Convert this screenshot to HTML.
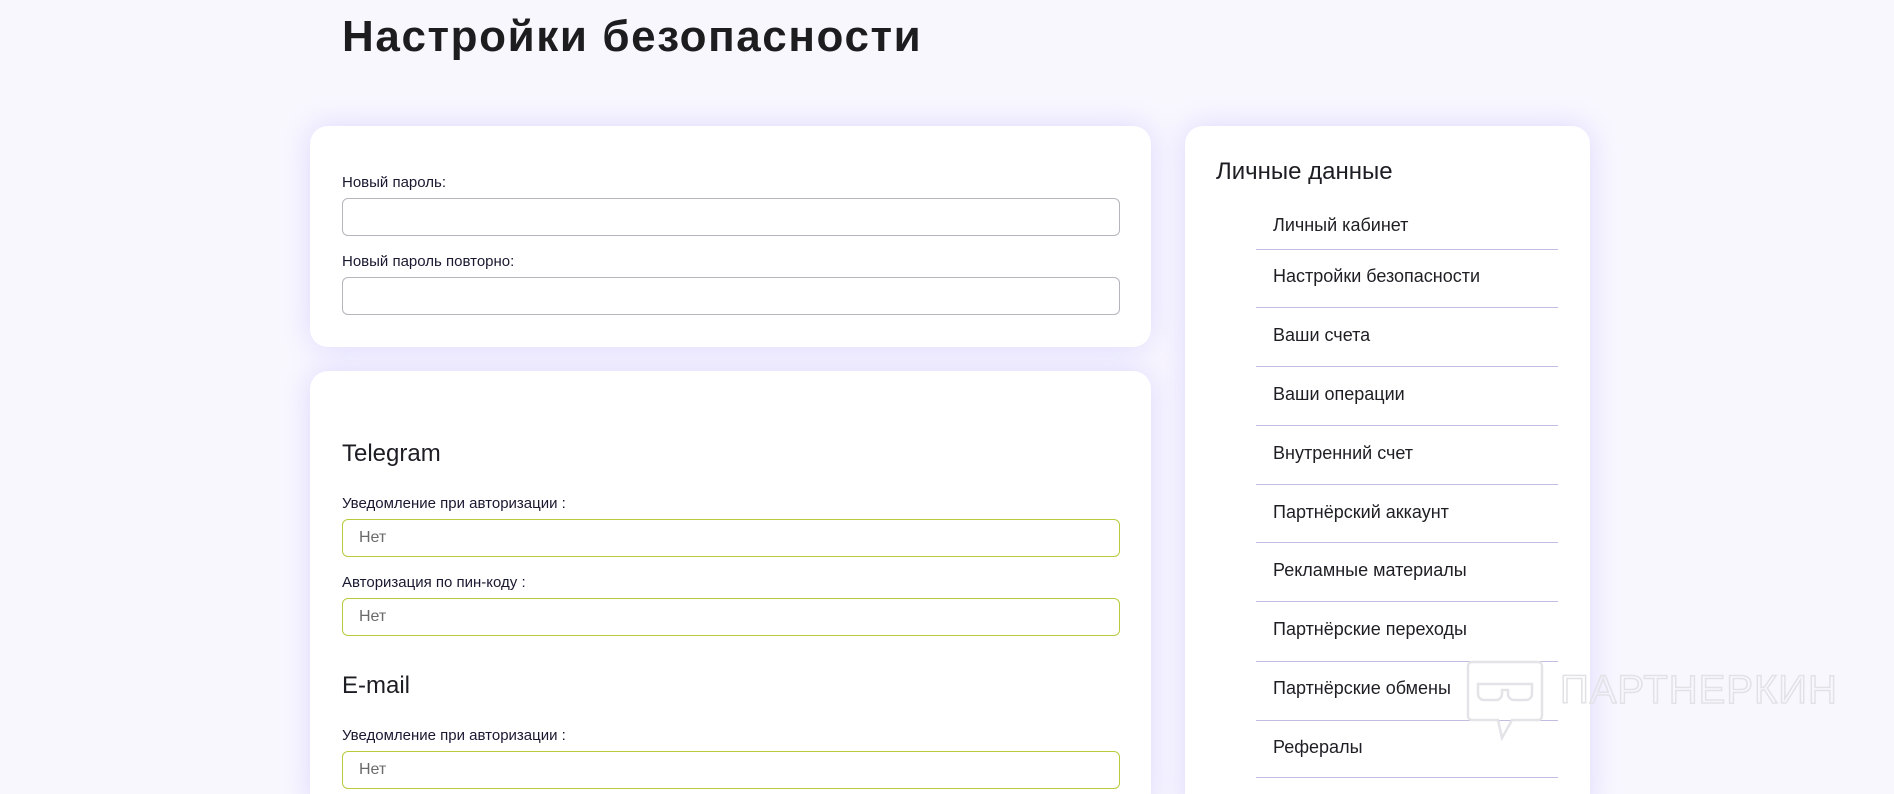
<!DOCTYPE html>
<html><head><meta charset="utf-8"><style>
*{box-sizing:border-box;margin:0;padding:0}
html{width:1894px;height:794px;overflow:hidden}
body{width:1894px;height:794px;overflow:hidden;background:#f8f7fe;font-family:"Liberation Sans",sans-serif;position:relative;color:#1e1e24}
.a{position:absolute}
h1{position:absolute;left:342px;top:12px;font-size:44px;font-weight:700;color:#1d1d1f;letter-spacing:1.6px}
.card{position:absolute;background:#fff;border-radius:18px;box-shadow:0 0 28px rgba(190,180,255,0.45)}
.lbl{position:absolute;left:342px;font-size:15px;color:#1a1830}
.inp{position:absolute;left:342px;width:778px;height:38px;border:1px solid #b5b5bb;border-radius:6px;background:#fff}
.g{border-color:#b9cb3c;font-size:16px;color:#6a6a6a;padding:9px 0 0 16px}
.h2{position:absolute;left:342px;font-size:24px;color:#1d1d24}
.mi{position:absolute;left:1273px;font-size:18px;color:#1e1e24}
.ln{position:absolute;left:1256px;width:302px;height:1px;background:#c2bde2}
</style></head><body>
<h1>Настройки безопасности</h1>
<div class="card" style="left:310px;top:126px;width:841px;height:221px"></div>
<div class="card" style="left:310px;top:371px;width:841px;height:440px"></div>
<div class="card" style="left:1185px;top:126px;width:405px;height:690px"></div>

<div class="lbl" style="top:174px">Новый пароль:</div>
<div class="inp" style="top:198px"></div>
<div class="lbl" style="top:253px">Новый пароль повторно:</div>
<div class="inp" style="top:277px"></div>

<div class="h2" style="top:440px">Telegram</div>
<div class="lbl" style="top:495px">Уведомление при авторизации :</div>
<div class="inp g" style="top:519px">Нет</div>
<div class="lbl" style="top:574px">Авторизация по пин-коду :</div>
<div class="inp g" style="top:598px">Нет</div>
<div class="h2" style="top:672px">E-mail</div>
<div class="lbl" style="top:727px">Уведомление при авторизации :</div>
<div class="inp g" style="top:751px">Нет</div>

<div class="h2" style="left:1216px;top:158px">Личные данные</div>
<div class="mi" style="top:215px">Личный кабинет</div><div class="ln" style="top:249px"></div>
<div class="mi" style="top:266px">Настройки безопасности</div><div class="ln" style="top:307px"></div>
<div class="mi" style="top:325px">Ваши счета</div><div class="ln" style="top:366px"></div>
<div class="mi" style="top:384px">Ваши операции</div><div class="ln" style="top:425px"></div>
<div class="mi" style="top:443px">Внутренний счет</div><div class="ln" style="top:484px"></div>
<div class="mi" style="top:502px">Партнёрский аккаунт</div><div class="ln" style="top:542px"></div>
<div class="mi" style="top:560px">Рекламные материалы</div><div class="ln" style="top:601px"></div>
<div class="mi" style="top:619px">Партнёрские переходы</div><div class="ln" style="top:661px"></div>
<div class="mi" style="top:678px">Партнёрские обмены</div><div class="ln" style="top:720px"></div>
<div class="mi" style="top:737px">Рефералы</div><div class="ln" style="top:777px"></div>

<svg class="a" style="left:1466px;top:660px" width="80" height="82" viewBox="0 0 80 82" fill="none" stroke="#e4e4e8" stroke-width="2.5">
<path d="M6 2h66a4 4 0 0 1 4 4v50a4 4 0 0 1-4 4H46l-10 18-4-18H6a4 4 0 0 1-4-4V6a4 4 0 0 1 4-4z"/>
<path d="M12 24h54v10a6 6 0 0 1-6 6H48a6 6 0 0 1-6-6v-4h-6v4a6 6 0 0 1-6 6H18a6 6 0 0 1-6-6z"/>
</svg>
<div class="a" style="left:1560px;top:668px;font-size:40px;color:transparent;-webkit-text-stroke:1.5px #e2e2e6;letter-spacing:1px">ПАРТНЕРКИН</div>
</body></html>
